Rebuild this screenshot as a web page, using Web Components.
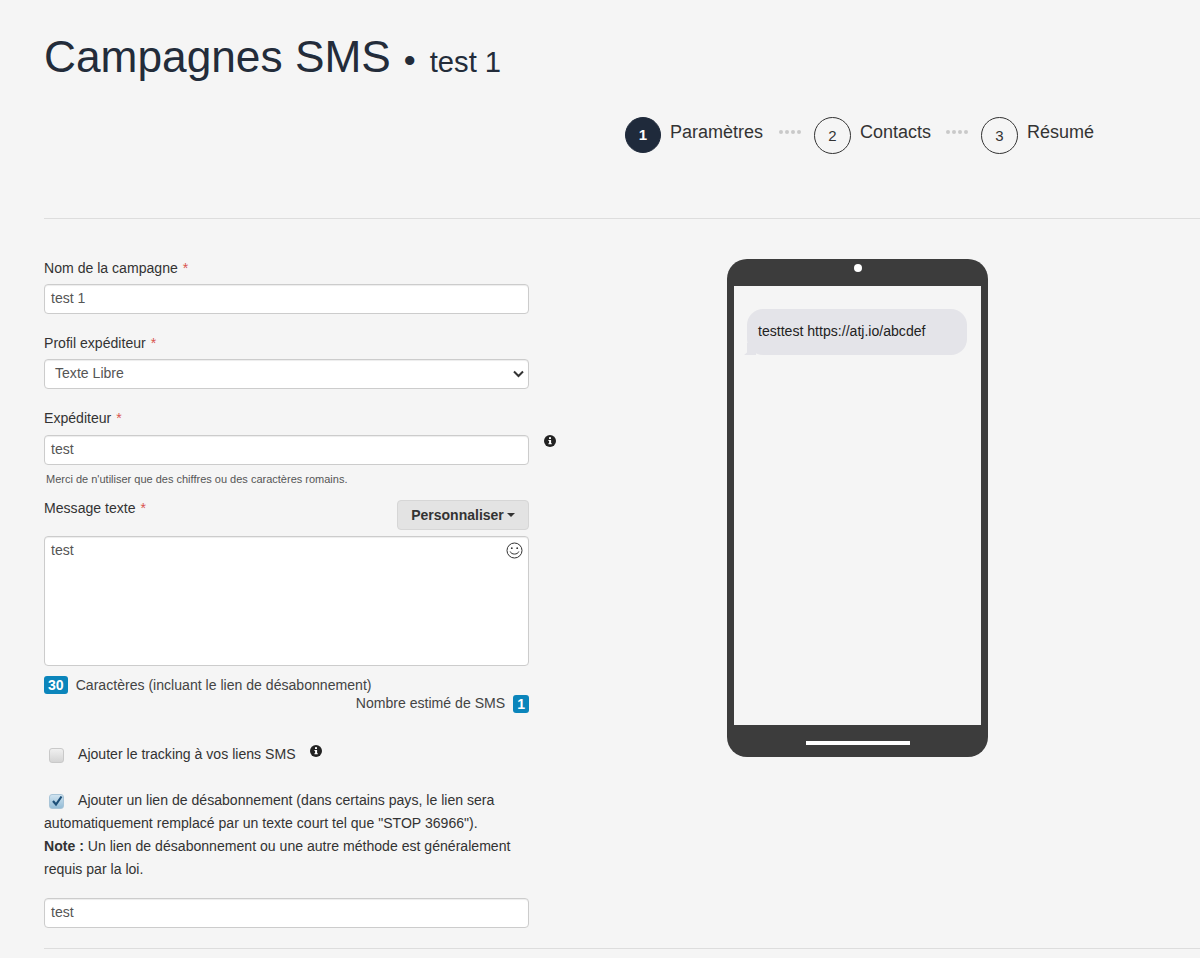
<!DOCTYPE html>
<html lang="fr">
<head>
<meta charset="utf-8">
<title>Campagnes SMS</title>
<style>
  html, body { margin: 0; background: #f5f5f5; }
  body { font: 14.08px/20px "Liberation Sans", Arial, sans-serif; color: #333; overflow: hidden; }
</style>
</head>
<body>
<campaign-page>
  <campaign-header slot="header" name="Campagnes SMS" detail="test 1">
    <step-item number="1" active>Paramètres</step-item>
    <step-item number="2" linked>Contacts</step-item>
    <step-item number="3" linked style="--dots-left:15px">Résumé</step-item>
  </campaign-header>

  <campaign-form slot="form">
    <form-field label="Nom de la campagne" required><text-box>test 1</text-box></form-field>
    <form-field label="Profil expéditeur" required style="margin-top:19px"><text-box select>Texte Libre</text-box></form-field>
    <form-field label="Expéditeur" required style="margin-top:19px" gap="7" hint="Merci de n'utiliser que des chiffres ou des caractères romains.">
      <text-box>test</text-box>
      <info-icon slot="aside" style="margin:0 0 0 15px"></info-icon>
    </form-field>
    <message-field style="margin-top:14px"></message-field>
    <check-row style="margin-top:30px">Ajouter le tracking à vos liens SMS<info-icon style="margin:-8px 0 0 14px;vertical-align:middle"></info-icon></check-row>
    <check-row checked style="margin-top:23px">Ajouter un lien de désabonnement (dans certains pays, le lien sera<br>automatiquement remplacé par un texte court tel que "STOP 36966").<br><b>Note :</b> Un lien de désabonnement ou une autre méthode est généralement<br>requis par la loi.</check-row>
    <text-box style="margin-top:17px">test</text-box>
  </campaign-form>

  <phone-preview slot="preview">testtest https://atj.io/abcdef</phone-preview>
</campaign-page>

<script>
// Page shell: header, then form + preview columns, then closing rule
class CampaignPage extends HTMLElement {
  constructor() {
    super();
    this.attachShadow({mode: 'open'}).innerHTML = `
      <style>
        :host { display: block; padding-left: 44px; }
        .columns { display: flex; padding-top: 39px; border-top: 1px solid #ddd; }
        .form { display: block; width: 485px; flex: none; }
        .preview { display: block; margin: 1px 0 0 198px; flex: none; }
        .foot { height: 20px; border-bottom: 1px solid #ddd; }
      </style>
      <slot name="header"></slot>
      <div class="columns">
        <div class="form"><slot name="form"></slot></div>
        <div class="preview"><slot name="preview"></slot></div>
      </div>
      <div class="foot"></div>
    `;
  }
}

class CampaignHeader extends HTMLElement {
  constructor() {
    super();
    this.attachShadow({mode: 'open'}).innerHTML = `
      <style>
        :host { display: block; padding: 33px 0 64px; color: #232c3a; }
        h1 { margin: 0; height: 48px; font-size: 44.25px; line-height: 48px; font-weight: 400; }
        small { font-size: 29.2px; }
        .dot { font-size: 34px; margin: 0 14px 0 13px; }
        .steps { display: flex; justify-content: flex-end; margin-top: 36px; padding-right: 106px; }
      </style>
      <h1><span id="name"></span><small class="dot">•</small><small id="detail"></small></h1>
      <div class="steps"><slot></slot></div>
    `;
  }

  connectedCallback() {
    this.shadowRoot.getElementById('name').textContent = this.getAttribute('name');
    this.shadowRoot.getElementById('detail').textContent = this.getAttribute('detail');
  }
}

class StepItem extends HTMLElement {
  constructor() {
    super();
    this.attachShadow({mode: 'open'}).innerHTML = `
      <style>
        :host { display: flex; align-items: flex-start; color: #333; }
        .dots { display: none; gap: 2px; margin: 13px 13px 0 var(--dots-left, 16px); }
        :host([linked]) .dots { display: flex; }
        .dots i { width: 4px; height: 4px; border-radius: 50%; background: #c9c9c9; }
        .num { box-sizing: border-box; width: 37px; height: 37px; border: 1px solid #333; border-radius: 50%;
               display: flex; align-items: center; justify-content: center; font-size: 15px; }
        :host([active]) .num { width: 36px; height: 36px; background: #1f2a3b; border-color: #1f2a3b; color: #fff; font-weight: 700; }
        .label { margin-left: 9px; font-size: 18px; line-height: 30px; }
      </style>
      <div class="dots"><i></i><i></i><i></i><i></i></div>
      <div class="num"></div>
      <div class="label"><slot></slot></div>
    `;
  }

  connectedCallback() {
    this.shadowRoot.querySelector('.num').textContent = this.getAttribute('number');
  }
}

class CampaignForm extends HTMLElement {
  constructor() {
    super();
    this.attachShadow({mode: 'open'}).innerHTML = `
      <style>:host { display: block; }</style>
      <slot></slot>
    `;
  }
}

class FormField extends HTMLElement {
  constructor() {
    super();
    this.attachShadow({mode: 'open'}).innerHTML = `
      <style>
        :host { display: block; }
        label { display: block; }
        em { font-style: normal; color: #d9534f; margin-left: 1px; }
        .row { display: flex; }
        .row ::slotted(text-box) { flex: none; width: 100%; }
        .hint { margin: 7px 0 0 2px; font-size: 11px; line-height: 14px; color: #555; }
      </style>
      <label></label>
      <div class="row"><slot></slot><slot name="aside"></slot></div>
      <div class="hint"></div>
    `;
  }

  connectedCallback() {
    const label = this.shadowRoot.querySelector('label');
    label.textContent = this.getAttribute('label') + ' ';
    if (this.hasAttribute('required')) {
      label.insertAdjacentHTML('beforeend', '<em>*</em>');
    }
    label.style.marginBottom = (this.getAttribute('gap') || 6) + 'px';
    const hint = this.shadowRoot.querySelector('.hint');
    if (this.hasAttribute('hint')) {
      hint.textContent = this.getAttribute('hint');
    } else {
      hint.remove();
    }
  }
}

// Looks like a form control, keeps its value as slotted text
class TextBox extends HTMLElement {
  constructor() {
    super();
    this.attachShadow({mode: 'open'}).innerHTML = `
      <style>
        :host { display: block; box-sizing: border-box; height: 30px; padding: 3px 6px; background: #fff; color: #555;
                border: 1px solid #ccc; border-radius: 4px; box-shadow: inset 0 1px 1px rgba(0,0,0,.075); position: relative; }
        :host([select]) { padding-left: 10px; }
        svg { display: none; position: absolute; right: 3px; top: 9px; }
        :host([select]) svg { display: block; }
      </style>
      <slot></slot>
      <svg width="13" height="10" viewBox="0 0 13 10"><path d="M2 2.5l4.5 4.5L11 2.5" fill="none" stroke="#333" stroke-width="2"/></svg>
    `;
  }
}

class InfoIcon extends HTMLElement {
  constructor() {
    super();
    this.attachShadow({mode: 'open'}).innerHTML = `
      <style>:host { display: inline-block; width: 12px; height: 12px; flex: none; line-height: 0; } svg { display: block; }</style>
      <svg width="12" height="12" viewBox="0 0 12 12">
        <circle cx="6" cy="6" r="6" fill="#222"/>
        <rect x="5" y="2.2" width="2" height="1.8" fill="#fff"/>
        <path d="M4.4 5h2.7v3.2h.7v1H4.4v-1h.7V6h-.7z" fill="#fff"/>
      </svg>
    `;
  }
}

class MessageField extends HTMLElement {
  constructor() {
    super();
    this.attachShadow({mode: 'open'}).innerHTML = `
      <style>
        :host { display: block; }
        .top { display: flex; justify-content: space-between; align-items: flex-start; margin-bottom: 6px; }
        .label { margin-top: -2px; }
        em { font-style: normal; color: #d9534f; margin-left: 1px; }
        button { box-sizing: border-box; width: 132px; height: 30px; padding: 0; font: 700 14px "Liberation Sans", Arial, sans-serif; color: #333;
                 background: #e3e3e3; border: 1px solid #d6d6d6; border-radius: 4px; display: flex; align-items: center; justify-content: center; }
        .caret { width: 0; height: 0; margin-left: 3px; border: 4px solid transparent; border-top-color: #333; border-bottom: 0; }
        .area { box-sizing: border-box; height: 130px; padding: 3px 6px; background: #fff; color: #555; border: 1px solid #ccc;
                border-radius: 4px; box-shadow: inset 0 1px 1px rgba(0,0,0,.075); position: relative; }
        .smile { position: absolute; right: 5px; top: 5px; }
        .count { display: flex; align-items: center; margin-top: 10px; height: 18px; color: #444; }
        .count.end { justify-content: flex-end; margin-top: 1px; }
        .count.end span:first-child { margin-top: -2px; }
        .badge { background: #0b85bb; color: #fff; font-weight: 700; height: 18px; line-height: 18px; border-radius: 3px; padding: 0 4px; }
        .count .badge { margin-right: 8px; }
        .count.end .badge { margin: 0 0 0 8px; }
      </style>
      <div class="top">
        <div class="label">Message texte <em>*</em></div>
        <button>Personnaliser<span class="caret"></span></button>
      </div>
      <div class="area">test
        <svg class="smile" width="17" height="17" viewBox="0 0 17 17" fill="none" stroke="#333">
          <circle cx="8.5" cy="8.5" r="7.5"/>
          <path d="M4.2 9.5c1 3.4 7.6 3.4 8.6 0"/>
          <circle cx="5.8" cy="6.2" r=".9" fill="#333" stroke="none"/>
          <circle cx="11.2" cy="6.2" r=".9" fill="#333" stroke="none"/>
        </svg>
      </div>
      <div class="count"><span class="badge">30</span>Caractères (incluant le lien de désabonnement)</div>
      <div class="count end"><span>Nombre estimé de SMS</span><span class="badge">1</span></div>
    `;
  }
}

class CheckRow extends HTMLElement {
  constructor() {
    super();
    this.attachShadow({mode: 'open'}).innerHTML = `
      <style>
        :host { display: block; line-height: 23px; color: #333; }
        .box { display: inline-block; box-sizing: border-box; width: 15px; height: 15px; margin: 0 14px 0 5px; vertical-align: -4px;
               border: 1px solid #c9c9c9; border-radius: 3px; background: linear-gradient(#f0f0f0, #d4d4d4); position: relative; }
        :host([checked]) .box { background: linear-gradient(#cfe3f0, #94bcd6); border-color: #a9c5d8; }
        svg { display: none; position: absolute; left: 1px; top: 0; }
        :host([checked]) svg { display: block; }
      </style>
      <span class="box"><svg width="12" height="12" viewBox="0 0 12 12"><path d="M2 6l3 3.5L10.5 1.5" fill="none" stroke="#1d4f78" stroke-width="2.2"/></svg></span><slot></slot>
    `;
  }
}

class PhonePreview extends HTMLElement {
  constructor() {
    super();
    this.attachShadow({mode: 'open'}).innerHTML = `
      <style>
        :host { display: flex; flex-direction: column; box-sizing: border-box; width: 261px; height: 498px; padding: 0 7px; background: #3c3c3c; border-radius: 20px; }
        .top { height: 27px; flex: none; display: flex; justify-content: center; align-items: center; padding-bottom: 9px; box-sizing: border-box; }
        .cam { width: 8px; height: 8px; border-radius: 50%; background: #fff; }
        .screen { flex: 1; background: #f5f5f5; padding: 23px 14px 0 13px; }
        .bubble { position: relative; box-sizing: border-box; height: 46px; padding: 12px 11px; background: #e4e4e9; border-radius: 16px; color: #222; }
        .bubble::before { content: ""; position: absolute; left: -3px; bottom: 0; width: 12px; height: 12px; background: #e4e4e9; clip-path: polygon(0 100%, 100% 100%, 100% 0, 25% 0, 25% 80%); }
        .bottom { height: 32px; flex: none; display: flex; justify-content: center; align-items: center; padding-top: 3px; box-sizing: border-box; }
        .bar { width: 104px; height: 4px; background: #fff; }
      </style>
      <div class="top"><div class="cam"></div></div>
      <div class="screen"><div class="bubble"><slot></slot></div></div>
      <div class="bottom"><div class="bar"></div></div>
    `;
  }
}

window.customElements.define('campaign-page', CampaignPage);
window.customElements.define('campaign-header', CampaignHeader);
window.customElements.define('step-item', StepItem);
window.customElements.define('campaign-form', CampaignForm);
window.customElements.define('form-field', FormField);
window.customElements.define('text-box', TextBox);
window.customElements.define('info-icon', InfoIcon);
window.customElements.define('message-field', MessageField);
window.customElements.define('check-row', CheckRow);
window.customElements.define('phone-preview', PhonePreview);
</script>
</body>
</html>
